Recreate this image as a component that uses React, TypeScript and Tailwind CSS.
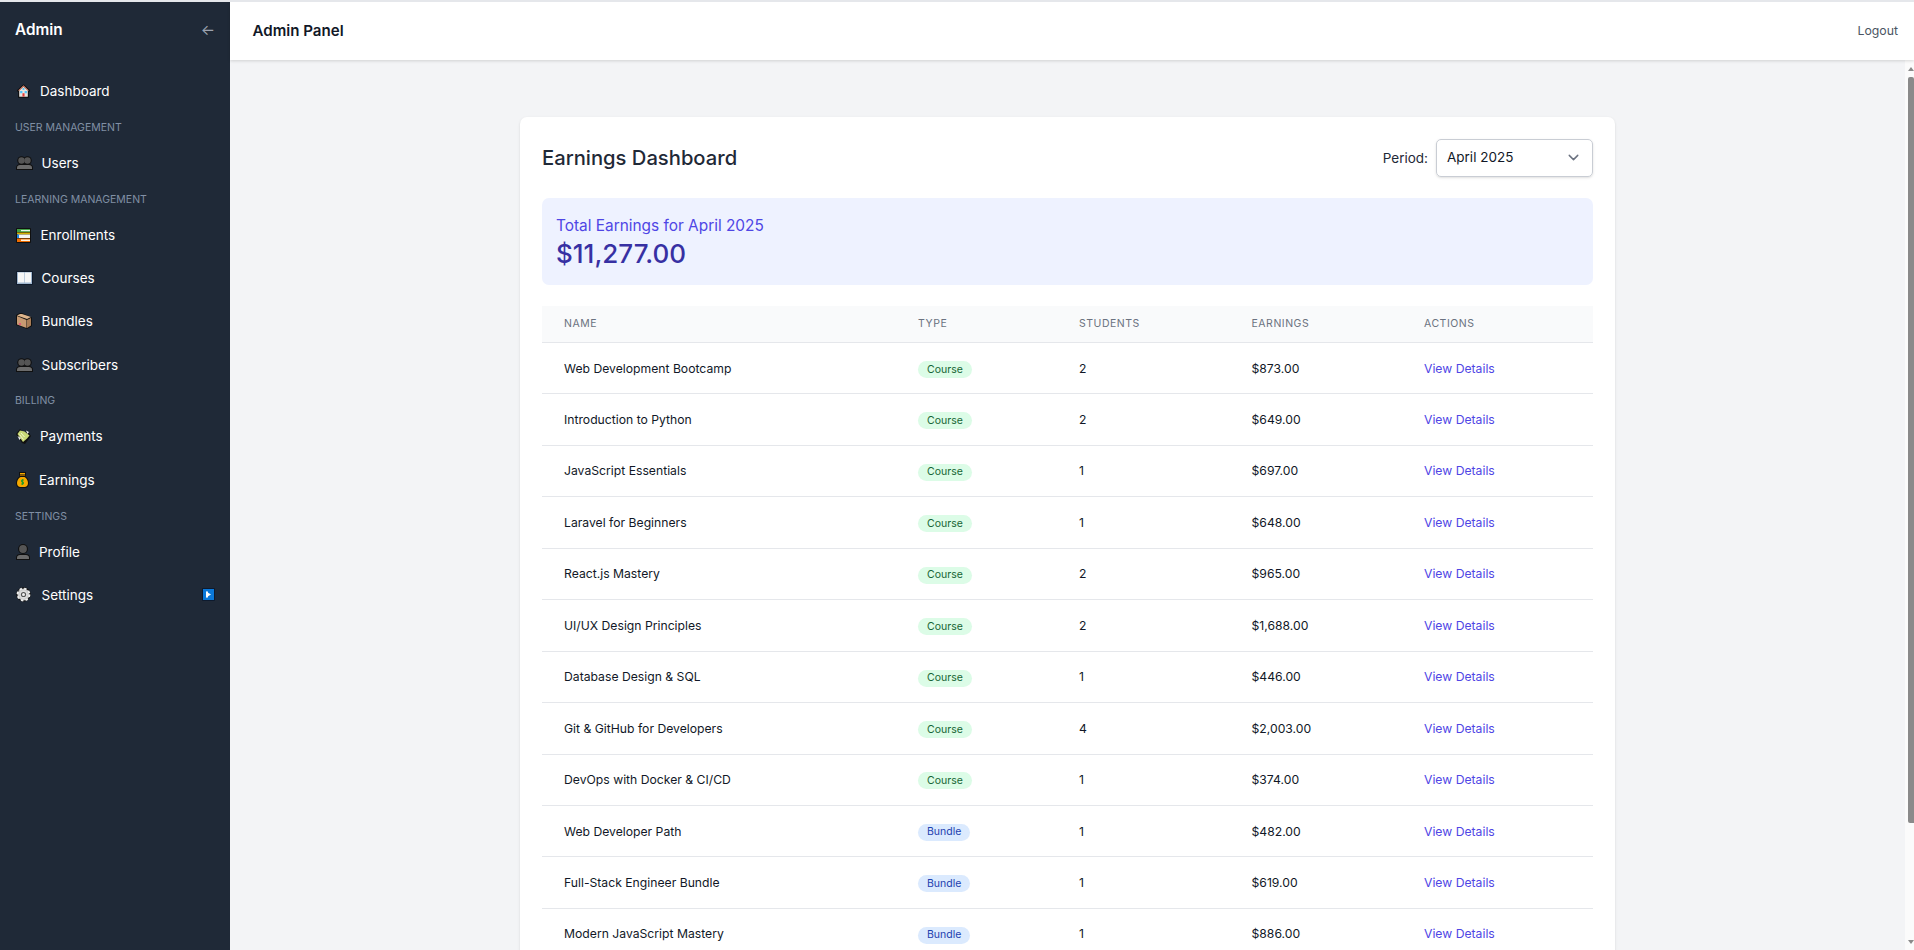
import React from 'react'
import { ChevronDown } from 'lucide-react'

const font = "font-['Inter','Liberation_Sans',sans-serif]"

const HomeIcon = () => (
  <svg viewBox="0 0 16 16" className="w-[15px] h-[16px]">
    <path d="M8 .8 1 7.2v1.4h1.2v6.6h11.6V8.6H15V7.2Z" fill="#101010" />
    <path d="M8 2 2.4 7.4h1V14h9.2V7.4h1Z" fill="#e8e4df" />
    <path d="M8 2 2.400 7.400h1.400L8 3.400l4.200 4h1.400Z" fill="#b5533c" />
    <rect x="4.400" y="8" width="2.400" height="2.400" fill="#4fc3f7" />
    <rect x="9.200" y="8" width="2.400" height="2.400" fill="#4fc3f7" />
    <rect x="6.900" y="10.400" width="2.200" height="3.600" fill="#e53935" />
    <rect x="7" y="4.800" width="2" height="2" fill="#4fc3f7" />
  </svg>
)

const BustsIcon = () => (
  <svg viewBox="0 0 17 14" className="w-[17px] h-[14px]">
    <circle cx="11.500" cy="4.500" r="4.300" fill="#101010" />
    <circle cx="5.500" cy="4.500" r="4.300" fill="#101010" />
    <circle cx="11.500" cy="4.500" r="3.200" fill="#555555" />
    <circle cx="5.500" cy="4.500" r="3.200" fill="#555555" />
    <path d="M0 14v-2.500C0 9.200 2 8 4 8h9c2 0 4 1.200 4 3.500V14Z" fill="#101010" />
    <path d="M1 13v-1.500C1 10 2.500 9 4 9h9c1.500 0 3 1 3 2.500V13Z" fill="#6b6b6b" />
  </svg>
)

const BooksIcon = () => (
  <svg viewBox="0 0 15 15" className="w-[15px] h-[15px]">
    <rect x="0" y="0" width="15" height="15" rx="1" fill="#101010" />
    <rect x="1" y="1" width="13" height="3" fill="#43a047" />
    <rect x="5" y="2" width="9" height="1.200" fill="#e8f5e9" />
    <rect x="1" y="4.500" width="13" height="2" fill="#d4b106" />
    <rect x="2" y="6.500" width="12" height="3.500" fill="#f5f5f5" />
    <rect x="1" y="6.500" width="2" height="3.500" fill="#1e88e5" />
    <rect x="1" y="10.500" width="13" height="3.500" fill="#ef6c00" />
    <rect x="5" y="11.500" width="9" height="1.500" fill="#fff3e0" />
  </svg>
)

const OpenBookIcon = () => (
  <svg viewBox="0 0 17 14" className="w-[17px] h-[14px]">
    <rect width="17" height="14" rx="1" fill="#0f1a2b" />
    <rect x="1" y="1" width="15" height="12" fill="#9fb6cf" />
    <rect x="2" y="1.500" width="6.200" height="10" fill="#f7f7f7" />
    <rect x="8.800" y="1.500" width="6.200" height="10" fill="#f7f7f7" />
  </svg>
)

const BoxIcon = () => (
  <svg viewBox="0 0 16 16" className="w-[16px] h-[16px]">
    <path d="M4 0 0 2v10l11 4 5-3V4.500L6 0Z" fill="#101010" />
    <path d="M4 1 1 2.500l10 3.500 4-2L6 1Z" fill="#dcb48c" />
    <path d="M1 3v8.500l9.500 3.500V7Z" fill="#c79a72" />
    <path d="M11 7v8l4-2.500V5Z" fill="#a87c56" />
    <rect x="3" y="10" width="2" height="2" fill="#e05a7a" />
  </svg>
)

const MoneyWingsIcon = () => (
  <svg viewBox="0 0 15 15" className="w-[15px] h-[15px]">
    <path d="M4 0 0 5l6 9 3 1 6-8-2-3-2-1-3 1Z" fill="#101010" />
    <path d="M4 1.500 1.500 5l5.500 8 4-3.500 2.500-3-5-4Z" fill="#c9d977" />
    <path d="M5 4 8.500 8M3.500 5.500 7.500 10.500" stroke="#f4f7d0" strokeWidth="1" />
    <path d="M10 1.500 13 3 11.500 5Z" fill="#eeeeee" />
    <path d="M1.500 7 3.500 11 5 9Z" fill="#eeeeee" />
  </svg>
)

const MoneyBagIcon = () => (
  <svg viewBox="0 0 13 16" className="w-[13px] h-[16px]">
    <path d="M3 0h7v2.500L9.500 4.500C12 6 13 8.500 13 11c0 3-2 5-4 5H4c-2 0-4-2-4-5 0-2.500 1-5 3.500-6.500L3 2.500Z" fill="#101010" />
    <path d="M4 1h5v1.500H4ZM4.500 5h4C10.500 6.200 12 8.500 12 11c0 2.500-1.500 4-3.500 4h-4C2.500 15 1 13.500 1 11c0-2.500 1.500-4.800 3.500-6Z" fill="#f5a800" />
    <rect x="4" y="3" width="5" height="1" fill="#8a5a00" />
    <path d="M8 8H5.600v2h1.800v2H5M6.500 7.200v5.600" stroke="#1a9a2a" strokeWidth="0.900" fill="none" />
  </svg>
)

const BustIcon = () => (
  <svg viewBox="0 0 14 16" className="w-[14px] h-[16px]">
    <circle cx="7" cy="5" r="5" fill="#101010" />
    <circle cx="7" cy="5" r="3.900" fill="#555555" />
    <path d="M0 16v-2.500C0 11 2 10 4 10h6c2 0 4 1 4 3.500V16Z" fill="#101010" />
    <path d="M1 15v-1.500C1 12 2.500 11 4 11h6c1.500 0 3 1 3 2.500V15Z" fill="#6b6b6b" />
  </svg>
)

const GearIcon = () => (
  <svg viewBox="0 0 15 15" className="w-[15px] h-[15px]">
    <circle cx="7.500" cy="7.500" r="7.200" fill="#101010" />
    <circle cx="7.500" cy="7.500" r="6" fill="#c9c9c9" strokeDasharray="2.400 2.300" stroke="#efefef" strokeWidth="1.800" />
    <circle cx="7.500" cy="7.500" r="4.200" fill="#dddddd" />
    <circle cx="7.500" cy="7.500" r="2.600" fill="#555555" />
    <circle cx="7.500" cy="7.500" r="1.500" fill="#eeeeee" />
  </svg>
)

const PlayIcon = () => (
  <svg viewBox="0 0 13 13" className="w-[13px] h-[13px]">
    <rect width="13" height="13" rx="1" fill="#0d1a2e" />
    <rect x="1" y="1" width="11" height="11" fill="#0b78d8" />
    <path d="M4 3.500v6l5-3Z" fill="#ffffff" />
    <rect x="4" y="3.500" width="2" height="6" fill="#ffffff" />
  </svg>
)

const sidebar = [
  { type: 'link', label: 'Dashboard', icon: <HomeIcon />, box: 'w-[24px]' },
  { type: 'section', label: 'User Management' },
  { type: 'link', label: 'Users', icon: <BustsIcon />, box: 'w-[25.500px]' },
  { type: 'section', label: 'Learning Management' },
  { type: 'link', label: 'Enrollments', icon: <BooksIcon />, box: 'w-[24.500px]' },
  { type: 'link', label: 'Courses', icon: <OpenBookIcon />, box: 'w-[25.500px]' },
  { type: 'link', label: 'Bundles', icon: <BoxIcon />, box: 'w-[25.500px]' },
  { type: 'link', label: 'Subscribers', icon: <BustsIcon />, box: 'w-[25.500px]' },
  { type: 'section', label: 'Billing' },
  { type: 'link', label: 'Payments', icon: <MoneyWingsIcon />, box: 'w-[24px]' },
  { type: 'link', label: 'Earnings', icon: <MoneyBagIcon />, box: 'w-[23px]' },
  { type: 'section', label: 'Settings' },
  { type: 'link', label: 'Profile', icon: <BustIcon />, box: 'w-[23px]' },
  { type: 'link', label: 'Settings', icon: <GearIcon />, box: 'w-[25.500px]', arrow: true },
]

const rows = [
  { name: 'Web Development Bootcamp', type: 'Course', students: 2, earnings: '$873.00' },
  { name: 'Introduction to Python', type: 'Course', students: 2, earnings: '$649.00' },
  { name: 'JavaScript Essentials', type: 'Course', students: 1, earnings: '$697.00' },
  { name: 'Laravel for Beginners', type: 'Course', students: 1, earnings: '$648.00' },
  { name: 'React.js Mastery', type: 'Course', students: 2, earnings: '$965.00' },
  { name: 'UI/UX Design Principles', type: 'Course', students: 2, earnings: '$1,688.00' },
  { name: 'Database Design & SQL', type: 'Course', students: 1, earnings: '$446.00' },
  { name: 'Git & GitHub for Developers', type: 'Course', students: 4, earnings: '$2,003.00' },
  { name: 'DevOps with Docker & CI/CD', type: 'Course', students: 1, earnings: '$374.00' },
  { name: 'Web Developer Path', type: 'Bundle', students: 1, earnings: '$482.00' },
  { name: 'Full-Stack Engineer Bundle', type: 'Bundle', students: 1, earnings: '$619.00' },
  { name: 'Modern JavaScript Mastery', type: 'Bundle', students: 1, earnings: '$886.00' },
]

const App = () => {
  return (
    <div className={`${font} h-[950px] overflow-hidden bg-[#f3f4f6] border-t-2 border-[#e5e7eb] flex`}>
      <aside className="w-[230px] shrink-0 bg-[#1f2937] text-white">
        <div className="h-[57px] flex items-center justify-between pl-[15px] pr-[15px]">
          <span className="text-[15.300px] font-semibold">Admin</span>
          <span className="text-[15px] leading-none text-[#9ca3af] mb-[2px]">←</span>
        </div>
        <nav className="pt-[10.500px]">
          {sidebar.map((item, i) =>
            item.type === 'section' ? (
              <div key={i} className="h-[28.800px] flex items-center pt-[1.500px] pl-[15px] text-[10.500px] uppercase text-[#8190a5]">
                {item.label}
              </div>
            ) : (
              <div key={i} className="h-[43.200px] flex items-center pl-[16px] pr-[15px] text-[13.500px]">
                <span className={`${item.box} shrink-0 flex items-center`}>{item.icon}</span>
                <span className="flex-1">{item.label}</span>
                {item.arrow && <PlayIcon />}
              </div>
            )
          )}
        </nav>
      </aside>
      <div className="flex-1 min-w-0 flex flex-col">
        <header className="h-[58px] shrink-0 bg-white shadow-[0_1px_3px_rgba(0,0,0,0.15)] relative flex items-center justify-between pl-[22.500px] pr-[16px]">
          <span className="text-[15.100px] font-semibold text-[#111827]">Admin Panel</span>
          <span className="text-[12.300px] text-[#4b5563]">Logout</span>
        </header>
        <div className="flex-1 min-h-0 flex">
          <main className="flex-1 min-w-0 overflow-hidden pt-[57px]">
            <div className="w-[1095px] mx-auto bg-white rounded-[7px] shadow-sm px-[22px] pt-[22px]">
              <div className="flex items-center justify-between h-[37.500px]">
                <h1 className="text-[20.200px] font-[550] text-[#1f2937]">Earnings Dashboard</h1>
                <div className="flex items-center gap-[8px]">
                  <span className="text-[13.500px] text-[#1f2937]">Period:</span>
                  <div className="w-[157px] h-[37.500px] border border-[#c9cdd4] rounded-[5px] shadow-sm flex items-center justify-between pl-[10px] pr-[10px] text-[13.500px] text-[#111827]">
                    <span className="pb-[1px]">April 2025</span>
                    <ChevronDown size={17} className="text-[#6b7280]" />
                  </div>
                </div>
              </div>
              <div className="mt-[21.500px] h-[87px] bg-[#eef2ff] rounded-[7px] pl-[14px] pr-[15px] pt-[18px]">
                <div className="text-[15.400px] leading-[20px] text-[#4f46e5]">Total Earnings for April 2025</div>
                <div className="text-[26px] leading-[35px] font-[550] text-[#3730a3]">$11,277.00</div>
              </div>
              <table className="mt-[21px] w-full table-fixed border-collapse text-[12.200px] text-[#111827]">
                <colgroup>
                  <col className="w-[354px]" />
                  <col className="w-[161px]" />
                  <col className="w-[172.500px]" />
                  <col className="w-[172.500px]" />
                  <col />
                </colgroup>
                <thead>
                  <tr className="h-[36.500px] bg-[#f9fafb] border-b border-[#e5e7eb] text-[10.500px] uppercase tracking-[0.05em] text-[#6b7280] text-left">
                    <th className="pl-[22px] font-normal">Name</th>
                    <th className="pl-[22px] font-normal">Type</th>
                    <th className="pl-[22px] font-normal">Students</th>
                    <th className="pl-[22px] font-normal">Earnings</th>
                    <th className="pl-[22px] font-normal">Actions</th>
                  </tr>
                </thead>
                <tbody>
                  {rows.map((row) => (
                    <tr key={row.name} className="h-[51.450px] border-b border-[#e5e7eb]">
                      <td className="pl-[22px] pt-[1px]">{row.name}</td>
                      <td className="pl-[22px] pt-[1px]">
                        <span
                          className={
                            row.type === 'Course'
                              ? 'inline-flex items-center h-[17px] px-[9px] rounded-full bg-[#dcfce7] text-[#166534] text-[10.500px]'
                              : 'inline-flex items-center h-[17px] px-[9px] rounded-full bg-[#dbeafe] text-[#1e40af] text-[10.500px]'
                          }
                        >
                          {row.type}
                        </span>
                      </td>
                      <td className="pl-[22px] pt-[1px]">{row.students}</td>
                      <td className="pl-[22px] pt-[1px]">{row.earnings}</td>
                      <td className="pl-[22px] pt-[1px] text-[#4f46e5]">View Details</td>
                    </tr>
                  ))}
                </tbody>
              </table>
            </div>
          </main>
          <div className="w-[9px] shrink-0 bg-[#fbfbfb] flex flex-col pl-[3px]">
            <div className="h-[17px] flex items-center justify-center">
              <div className="w-0 h-0 border-x-[3px] border-x-transparent border-b-[4px] border-b-[#8a8a8a]" />
            </div>
            <div className="h-[746px] bg-[#8a8a8a] rounded-t-[2px] rounded-bl-[2px]" />
            <div className="flex-1 flex items-end justify-center pb-[6px]">
              <div className="w-0 h-0 border-x-[3px] border-x-transparent border-t-[4px] border-t-[#8a8a8a]" />
            </div>
          </div>
        </div>
      </div>
    </div>
  )
}

export default App
